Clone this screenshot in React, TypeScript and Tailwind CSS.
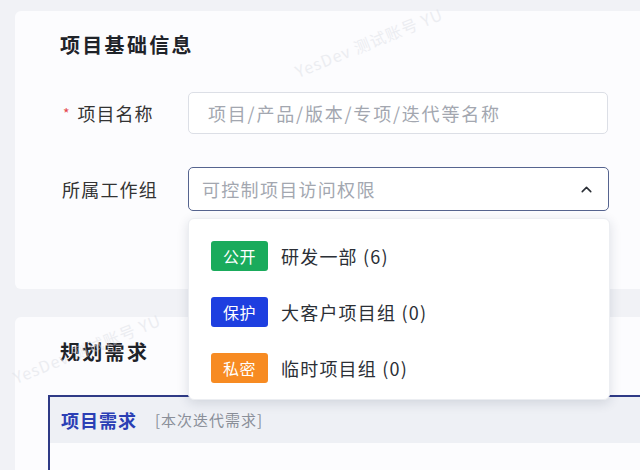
import React from 'react';
import { ChevronUp } from 'lucide-react';

const FONT = '"Noto Sans CJK SC", "Noto Sans", sans-serif';

const groups = [
  { tag: '公开', color: 'bg-[#1aab5c]', name: '研发一部 (6)' },
  { tag: '保护', color: 'bg-[#1e3fe0]', name: '大客户项目组 (0)' },
  { tag: '私密', color: 'bg-[#f78b22]', name: '临时项目组 (0)' },
];

const Watermark: React.FC<{ className: string }> = ({ className }) => (
  <div
    className={`pointer-events-none absolute text-[16px] tracking-[1px] text-[#dcdfe6] opacity-50 -rotate-[22deg] whitespace-nowrap ${className}`}
  >
    YesDev 测试账号 YU
  </div>
);

export default function App() {
  return (
    <div
      className="relative w-[640px] h-[470px] overflow-hidden bg-[#f1f2f6] text-[#2b2f36]"
      style={{ fontFamily: FONT }}
    >
      {/* Basic info card */}
      <div className="ml-[15px] mt-[11px] w-[640px] h-[278px] rounded-md bg-[#fcfcfe] pl-[45px] pt-[20px]">
        <h2 className="text-[20px] leading-[28px] font-bold tracking-[2.3px] text-[#1f2329]">项目基础信息</h2>

        <div className="mt-[33px] flex items-center">
          <div className="w-[128px] flex items-center pl-[3px] text-[18px] tracking-[1px] text-[#333]">
            <span className="text-[#e5484d] text-[14px] mr-[7px]">*</span>
            项目名称
          </div>
          <div className="w-[420px] h-[42px] rounded-[5px] border border-[#dcdfe6] bg-white flex items-center pl-[19px] text-[18px] tracking-[1.8px] text-[#a3a7b0]">
            项目/产品/版本/专项/迭代等名称
          </div>
        </div>

        <div className="mt-[33px] flex items-center">
          <div className="w-[128px] pl-[2px] text-[18px] tracking-[1.2px] text-[#333]">所属工作组</div>
          <div className="w-[421px] h-[44px] rounded-[5px] border border-[#56648f] bg-white flex items-center justify-between pl-[13px] pr-[13px] text-[18px] tracking-[1.3px] text-[#a3a7b0]">
            <span>可控制项目访问权限</span>
            <ChevronUp size={17} strokeWidth={2.2} className="text-[#2b2f36]" />
          </div>
        </div>
      </div>

      {/* Planning card */}
      <div className="ml-[15px] mt-[28px] w-[640px] h-[200px] rounded-md bg-[#fcfcfe] pt-[21px]">
        <h2 className="pl-[45px] text-[20px] leading-[28px] font-bold tracking-[2.3px] text-[#1f2329]">规划需求</h2>
        <div className="ml-[33px] mt-[29px] border-l-2 border-t-2 border-[#2f3a86] h-[120px]">
          <div className="h-[46px] bg-[#eef0f5] flex items-center pl-[11px] gap-[18px]">
            <span className="text-[18px] font-bold tracking-[1px] text-[#2b3fb5]">项目需求</span>
            <span className="text-[15px] tracking-[1px] text-[#8a8f99]">[本次迭代需求]</span>
          </div>
        </div>
      </div>

      {/* Select dropdown */}
      <div className="absolute left-[188px] top-[218px] w-[422px] h-[182px] rounded-md bg-white shadow-[0_3px_12px_rgba(30,40,70,0.14)] border border-[#eceef2] flex flex-col gap-[26px] pt-[22px] pl-[22px]">
        {groups.map((g) => (
          <div key={g.tag} className="flex items-center h-[30px]">
            <span
              className={`w-[57px] h-[30px] rounded-[3px] ${g.color} text-white text-[16px] tracking-[0.5px] flex items-center justify-center`}
            >
              {g.tag}
            </span>
            <span className="ml-[13px] text-[18px] tracking-[1.2px] text-[#2b2f36]">{g.name}</span>
          </div>
        ))}
      </div>

      <Watermark className="left-[290px] top-[30px]" />
      <Watermark className="left-[8px] top-[336px]" />
    </div>
  );
}
